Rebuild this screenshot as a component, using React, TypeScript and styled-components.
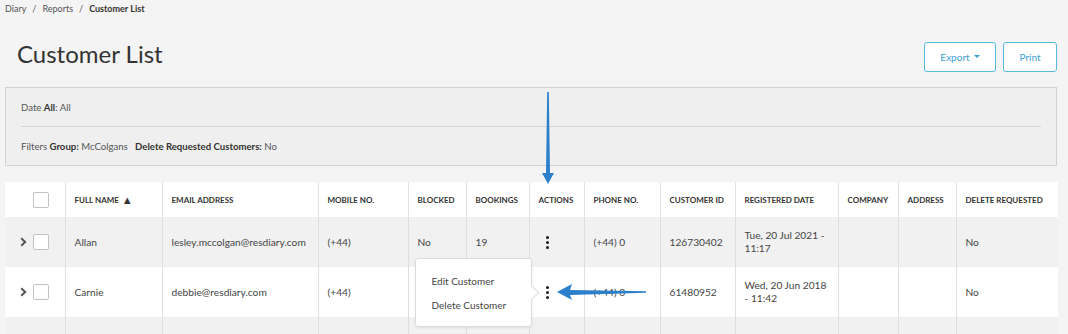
import React from 'react'
import styled, { createGlobalStyle } from 'styled-components'

const GlobalStyle = createGlobalStyle`
  html, body {
    margin: 0;
    padding: 0;
    background: #f4f4f4;
    font-family: Lato, "Open Sans", Arial, sans-serif;
    color: #444;
    overflow: hidden;
  }
`

interface Column {
  name: string
  width: number
  sort?: boolean
}

const columns: Column[] = [
  { name: '', width: 60 },
  { name: 'Full Name', width: 97, sort: true },
  { name: 'Email Address', width: 156 },
  { name: 'Mobile No.', width: 90 },
  { name: 'Blocked', width: 58 },
  { name: 'Bookings', width: 63 },
  { name: 'Actions', width: 55 },
  { name: 'Phone No.', width: 76 },
  { name: 'Customer ID', width: 75 },
  { name: 'Registered Date', width: 103 },
  { name: 'Company', width: 60 },
  { name: 'Address', width: 58 },
  { name: 'Delete Requested', width: 102 },
]

const rows = [
  {
    name: 'Allan',
    email: 'lesley.mccolgan@resdiary.com',
    mobile: '(+44)',
    blocked: 'No',
    bookings: '19',
    phone: '(+44) 0',
    id: '126730402',
    registered: ['Tue, 20 Jul 2021 -', '11:17'],
    deleteRequested: 'No',
  },
  {
    name: 'Carnie',
    email: 'debbie@resdiary.com',
    mobile: '(+44)',
    blocked: '',
    bookings: '',
    phone: '(+44) 0',
    id: '61480952',
    registered: ['Wed, 20 Jun 2018', '- 11:42'],
    deleteRequested: 'No',
    menuOpen: true,
  },
  {
    name: '',
    email: '',
    mobile: '',
    blocked: '',
    bookings: '',
    phone: '',
    id: '',
    registered: ['Tue, 13 Jun 2023 -', ''],
    deleteRequested: '',
    hideControls: true,
  },
]

const Page = styled.div`
  position: relative;
  width: 1068px;
  height: 334px;
  padding: 0 10px 0 5px;
  box-sizing: border-box;
  overflow: hidden;
`

const Breadcrumb = styled.div`
  display: flex;
  gap: 6px;
  padding-top: 3px;
  font-size: 9px;
  line-height: 12px;
  color: #555;
  b {
    color: #333;
  }
`

const HeaderRow = styled.div`
  display: flex;
  align-items: center;
  justify-content: space-between;
  height: 72px;
  padding-left: 12px;
`

const Title = styled.h1`
  margin: 0;
  margin-top: 4px;
  font-size: 24px;
  font-weight: 400;
  color: #333;
`

const ButtonGroup = styled.div`
  display: flex;
  gap: 7px;
  margin-top: 12px;
  margin-right: 1px;
`

const OutlineButton = styled.button<{ $width: number }>`
  width: ${p => p.$width}px;
  height: 30px;
  background: #fff;
  border: 1px solid #58b9dd;
  border-radius: 3px;
  color: #3d9fd2;
  font-family: inherit;
  font-size: 10px;
  display: flex;
  align-items: center;
  justify-content: center;
  gap: 4px;
  padding: 0;
`

const Caret = styled.span`
  width: 0;
  height: 0;
  border-left: 3px solid transparent;
  border-right: 3px solid transparent;
  border-top: 3px solid #3d9fd2;
  margin-top: -2px;
`

const FilterBox = styled.div`
  width: 1052px;
  height: 79px;
  box-sizing: border-box;
  background: #efefef;
  border: 1px solid #d2d2d2;
  padding: 0 15px;
  font-size: 9.6px;
  color: #555;
  b {
    color: #333;
  }
`

const FilterLine = styled.div<{ $divider?: boolean }>`
  height: 38px;
  display: flex;
  align-items: center;
  white-space: pre;
  border-bottom: ${p => (p.$divider ? '1px solid #d6d6d6' : 'none')};
`

const Table = styled.table`
  margin-top: 16px;
  border-collapse: collapse;
  table-layout: fixed;
  width: 1053px;
  font-size: 10.2px;
`

const Th = styled.th<{ $first?: boolean }>`
  height: 35px;
  background: #fff;
  text-align: left;
  padding: 0 0 0 9px;
  font-size: 8px;
  font-weight: 700;
  text-transform: uppercase;
  color: #333;
  white-space: nowrap;
  border-left: ${p => (p.$first ? 'none' : '1px solid #e2e2e2')};
`

const Tr = styled.tr<{ $shaded: boolean }>`
  background: ${p => (p.$shaded ? '#f1f1f1' : '#fff')};
`

const Td = styled.td<{ $first?: boolean }>`
  height: 50px;
  padding: 0 0 0 9px;
  color: #444;
  vertical-align: middle;
  line-height: 13px;
  border-left: ${p => (p.$first ? 'none' : '1px solid #dedede')};
  position: relative;
`

const ControlCell = styled.div`
  display: flex;
  align-items: center;
  justify-content: flex-end;
  gap: 6px;
  padding-right: 16px;
`

const Checkbox = styled.span`
  width: 14px;
  height: 14px;
  border: 1px solid #c3c3c3;
  border-radius: 2px;
  background: #fff;
  display: inline-block;
`

const Kebab = styled.div`
  display: flex;
  flex-direction: column;
  align-items: center;
  gap: 2px;
  width: 4px;
  margin-left: 7px;
  span {
    width: 3px;
    height: 3px;
    border-radius: 50%;
    background: #1a1a1a;
  }
`

const SortArrow = styled.span`
  margin-left: 5px;
  font-size: 8.5px;
  font-family: "DejaVu Sans", sans-serif;
`

const Menu = styled.div`
  position: absolute;
  right: 52px;
  top: -9px;
  width: 117px;
  height: 69px;
  background: #fff;
  border: 1px solid #dcdcdc;
  border-radius: 3px;
  box-shadow: 0 1px 3px rgba(0, 0, 0, 0.08);
  box-sizing: border-box;
  padding: 16px 0 0 16px;
  display: flex;
  flex-direction: column;
  gap: 12px;
  font-size: 10px;
  line-height: 12px;
  color: #444;
  z-index: 2;
  &::after {
    content: '';
    position: absolute;
    right: -6px;
    top: 28px;
    width: 10px;
    height: 10px;
    background: #fff;
    border-right: 1px solid #dcdcdc;
    border-top: 1px solid #dcdcdc;
    transform: rotate(45deg);
  }
`

const Annotation = styled.svg`
  position: absolute;
  pointer-events: none;
  z-index: 5;
`

const Dots = () => (
  <Kebab>
    <span />
    <span />
    <span />
  </Kebab>
)

const ChevronIcon = () => (
  <svg width="7" height="10" viewBox="0 0 7 10">
    <path d="M1.2 1.2 L5.2 5 L1.2 8.8" fill="none" stroke="#555" strokeWidth="2" />
  </svg>
)

export default function App() {
  return (
    <>
      <GlobalStyle />
      <Page>
        <Breadcrumb>
          <span>Diary</span>
          <span>/</span>
          <span>Reports</span>
          <span>/</span>
          <b>Customer List</b>
        </Breadcrumb>
        <HeaderRow>
          <Title>Customer List</Title>
          <ButtonGroup>
            <OutlineButton $width={72}>
              Export <Caret />
            </OutlineButton>
            <OutlineButton $width={54}>Print</OutlineButton>
          </ButtonGroup>
        </HeaderRow>
        <FilterBox>
          <FilterLine $divider>
            Date <b>All</b>: All
          </FilterLine>
          <FilterLine>
            Filters <b>Group:</b> McColgans   <b>Delete Requested Customers:</b> No
          </FilterLine>
        </FilterBox>
        <Table>
          <colgroup>
            {columns.map((c, i) => (
              <col key={i} style={{ width: c.width }} />
            ))}
          </colgroup>
          <thead>
            <tr>
              {columns.map((c, i) =>
                i === 0 ? (
                  <Th key={i} $first>
                    <ControlCell>
                      <Checkbox />
                    </ControlCell>
                  </Th>
                ) : (
                  <Th key={i}>
                    {c.name}
                    {c.sort && <SortArrow>▲</SortArrow>}
                  </Th>
                )
              )}
            </tr>
          </thead>
          <tbody>
            {rows.map((r, i) => (
              <Tr key={i} $shaded={i % 2 === 0}>
                <Td $first>
                  {!r.hideControls && (
                    <ControlCell>
                      <ChevronIcon />
                      <Checkbox />
                    </ControlCell>
                  )}
                </Td>
                <Td>{r.name}</Td>
                <Td>{r.email}</Td>
                <Td>{r.mobile}</Td>
                <Td>{r.blocked}</Td>
                <Td>{r.bookings}</Td>
                <Td>
                  {!r.hideControls && <Dots />}
                  {r.menuOpen && (
                    <Menu>
                      <span>Edit Customer</span>
                      <span>Delete Customer</span>
                    </Menu>
                  )}
                </Td>
                <Td>{r.phone}</Td>
                <Td>{r.id}</Td>
                <Td>
                  {r.registered[0]}
                  {r.registered[1] && <br />}
                  {r.registered[1]}
                </Td>
                <Td />
                <Td />
                <Td>{r.deleteRequested}</Td>
              </Tr>
            ))}
          </tbody>
        </Table>

        {/* annotation arrows */}
        <Annotation style={{ left: 540, top: 92 }} width="16" height="93" viewBox="0 0 16 93">
          <polygon points="7.2,0 8.8,0 10,81 14,81 8,92 2,81 6,81" fill="#2b7fcb" />
        </Annotation>
        <Annotation style={{ left: 556, top: 283 }} width="92" height="18" viewBox="0 0 92 18">
          <polygon points="1,9 16,1 14,7 90,8.3 90,9.7 14,12 16,17" fill="#2b7fcb" />
        </Annotation>
      </Page>
    </>
  )
}
